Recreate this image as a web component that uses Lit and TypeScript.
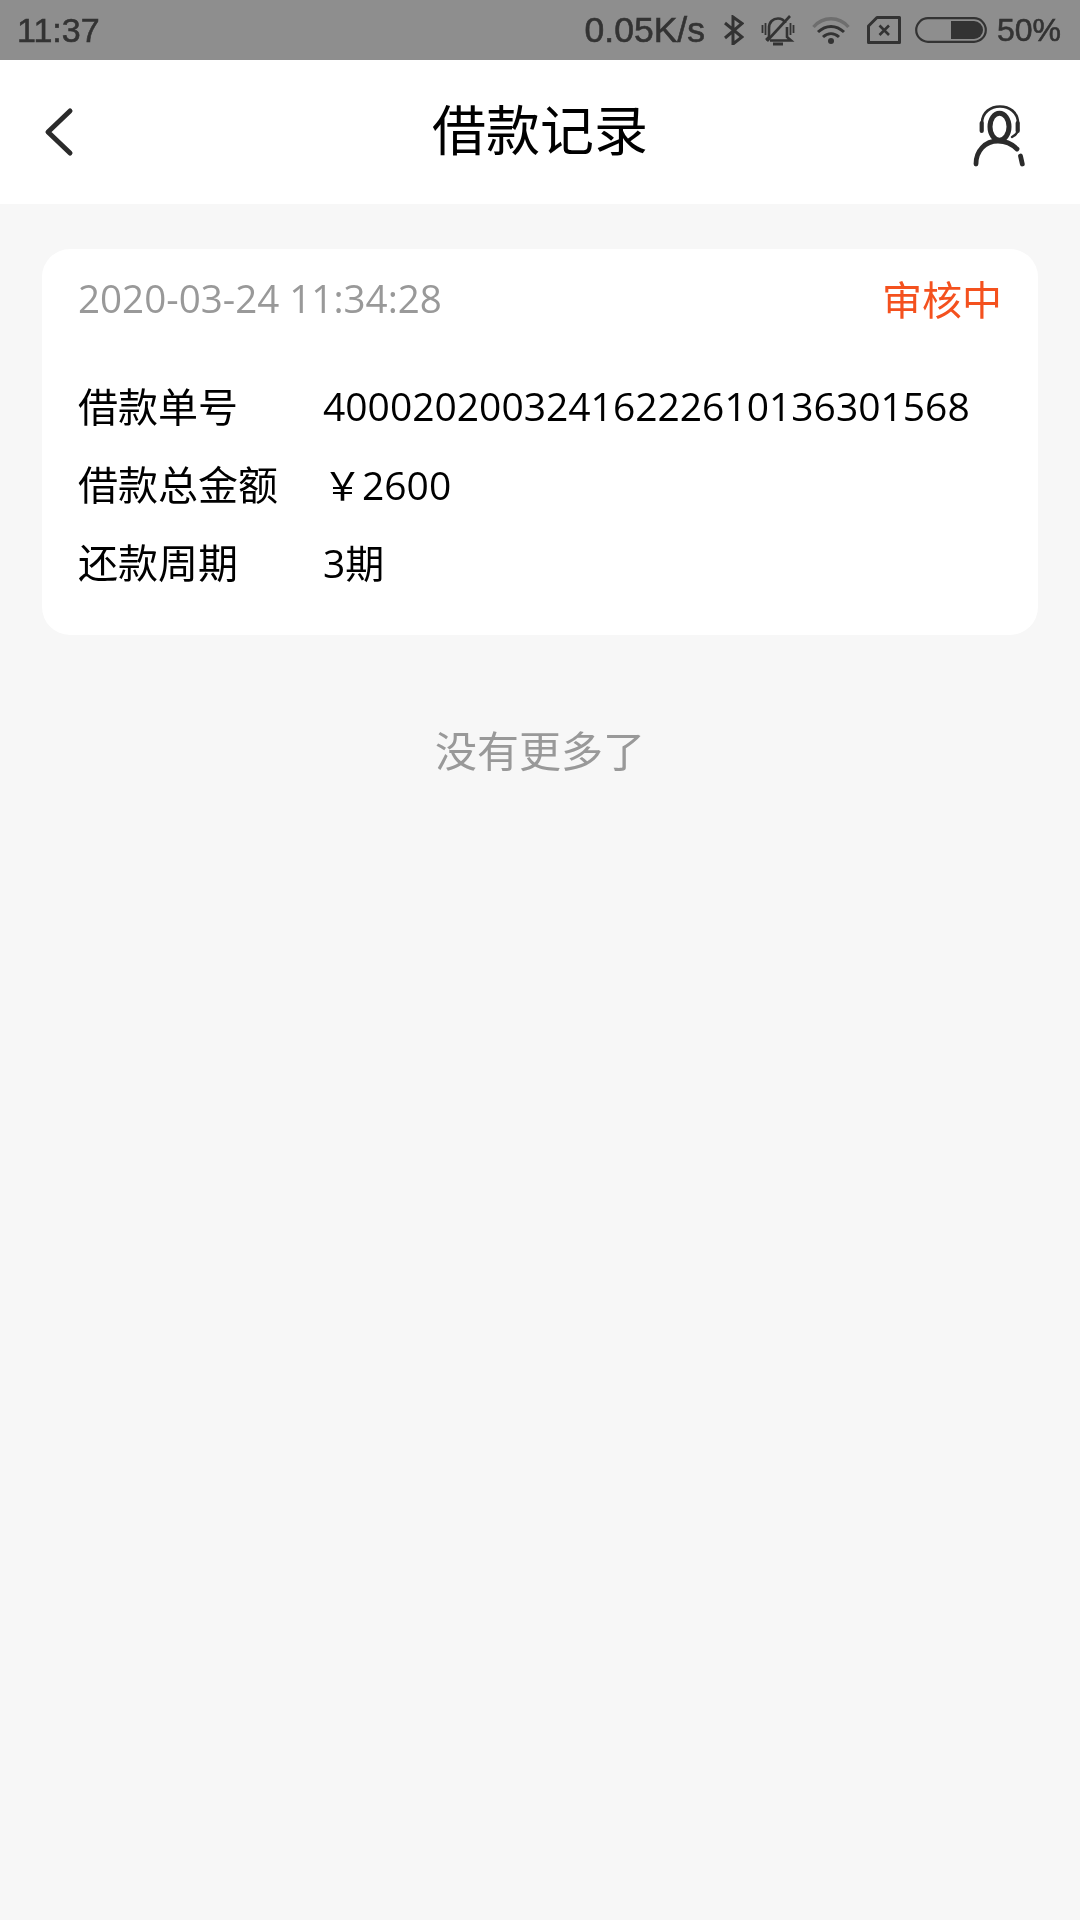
import { LitElement, html, css } from "lit";
import { customElement } from "lit/decorators.js";

@customElement("app-root")
export class AppRoot extends LitElement {
  static styles = css`
    :host { display: block; width: 1080px; height: 1920px; background: #f7f7f7; font-family: "Open Sans", "Noto Sans CJK SC", sans-serif; overflow: hidden; }
    .status { height: 60px; background: #8e8e8e; display: flex; align-items: center; padding: 0 19px 0 17px; color: #333; font-family: "Liberation Sans", sans-serif; box-sizing: border-box; -webkit-text-stroke: 0.6px #333; }
    .time { flex: 1; font-size: 34px; will-change: opacity; }
    .speed { font-size: 35.5px; will-change: opacity; }
    .pct { font-size: 32px; margin-left: 10px; will-change: opacity; }
    .status-right { display: flex; align-items: center; }
    .status svg { display: block; }
    .bt { margin-left: 19px; }
    .g17 { margin-left: 17px; }
    .g14 { margin-left: 14px; }
    .nav { height: 144px; background: #fff; display: flex; align-items: center; justify-content: space-between; padding: 0 0 0 44px; position: relative; }
    .title { position: absolute; left: 0; right: 0; text-align: center; font-size: 54px; line-height: 72px; color: #000; top: 34px; will-change: opacity; }
    .agent { margin-right: 54px; margin-top: 6px; }
    .card { margin: 45px 42px 0; height: 386px; background: #fff; border-radius: 28px; padding: 0 36px; box-sizing: border-box; }
    .head { display: flex; justify-content: space-between; align-items: center; height: 98px; font-size: 40px; will-change: opacity; }
    .date { color: #999; font-size: 38.6px; }
    .state { color: #f4511e; }
    .rows { padding-top: 19px; will-change: opacity; }
    .row { display: flex; height: 78px; align-items: center; font-size: 39px; color: #000; }
    .label { width: 245px; flex: none; font-size: 40px; }
    .more { margin-top: 86px; text-align: center; font-size: 42px; line-height: 60px; color: #999; will-change: opacity; }
  `;

  render() {
    return html`
      <div class="status">
        <span class="time">11:37</span>
        <div class="status-right">
          <span class="speed">0.05K/s</span>
          <svg class="bt" width="20" height="30" viewBox="0 0 20 30" fill="none" stroke="#333" stroke-width="3"><path d="M1 8 L18 22 L9 29 V2 L18 8.500 L1 23"/></svg>
          <svg class="g17" width="34" height="31" viewBox="0 0 34 31" fill="none" stroke="#333">
            <path d="M5 25 L8 22 V13 C8 7 12 3.500 17 3.500 C20 3.500 23 5 24.500 8 M26 12 V22 L30 25.500 H9" stroke-width="2.600"/>
            <path d="M12 29 H22" stroke-width="3"/>
            <path d="M1.500 10 V18 M4.500 8 V20 M29.500 8 V20 M32.500 10 V18" stroke-width="1.800"/>
            <path d="M6 26 L29 1" stroke-width="2.600"/>
          </svg>
          <svg class="g17" width="38" height="27" viewBox="0 0 38 27" fill="none">
            <path d="M1.500 10 C11 -1 27 -1 36.500 10" stroke="#6e6e6e" stroke-width="3.400"/>
            <path d="M6 15 C14 7.500 24 7.500 32 15 M11 20 C16 15.500 22 15.500 27 20" stroke="#333" stroke-width="3"/>
            <circle cx="19" cy="24" r="3" fill="#333"/>
          </svg>
          <svg class="g17" width="34" height="28" viewBox="0 0 34 28" fill="none" stroke="#333" stroke-width="3" stroke-linejoin="round"><path d="M10 1.500 H32.500 V26.500 H1.500 V10 Z"/><path d="M12.500 9.500 L22 19 M22 9.500 L12.500 19" stroke-width="2.600"/></svg>
          <svg class="g14" width="72" height="26" viewBox="0 0 72 26" fill="none"><rect x="1.200" y="1.200" width="69.600" height="23.600" rx="11.800" stroke="#333" stroke-width="2.200"/><path d="M36 4 H59 A9 9 0 0 1 59 22 H36 Z" fill="#333"/></svg>
          <span class="pct">50%</span>
        </div>
      </div>
      <div class="nav">
        <svg width="30" height="50" viewBox="0 0 30 50" fill="none" stroke="#2b2b2b" stroke-width="5" stroke-linecap="round" stroke-linejoin="round"><path d="M26 4 L4 25 L26 46"/></svg>
        <div class="title">借款记录</div>
        <svg class="agent" width="56" height="66" viewBox="0 0 56 66" fill="none" stroke="#2b2b2b" stroke-linecap="round">
          <path d="M12 21 C12 -1 48 -1 48 21" stroke-width="2.600"/>
          <path d="M11.700 21 V29 M47.700 21 V29" stroke-width="4.200"/>
          <path d="M48 28 C47.500 31 45 33.500 42 35" stroke-width="2.400"/>
          <ellipse cx="29.500" cy="24.700" rx="9.500" ry="13.500" stroke-width="5"/>
          <path d="M6 62 C6 49 15 39 28 39 C36 39 42 42 47 47" stroke-width="4.800"/>
          <path d="M50.500 54 L52.300 62" stroke-width="4.800"/>
        </svg>
      </div>
      <div class="card">
        <div class="head"><span class="date">2020-03-24 11:34:28</span><span class="state">审核中</span></div>
        <div class="rows">
          <div class="row"><span class="label">借款单号</span><span>40002020032416222610136301568</span></div>
          <div class="row"><span class="label">借款总金额</span><span>￥2600</span></div>
          <div class="row"><span class="label">还款周期</span><span>3期</span></div>
        </div>
      </div>
      <div class="more">没有更多了</div>
    `;
  }
}
